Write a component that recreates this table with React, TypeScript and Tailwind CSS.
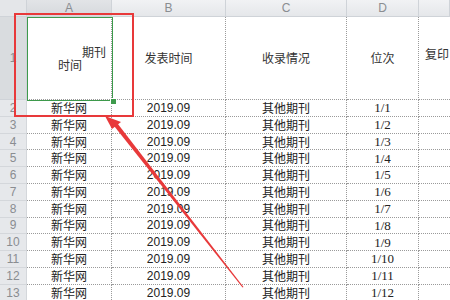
import React from 'react'

const cols = ['A', 'B', 'C', 'D', '']

const rows = Array.from({ length: 12 }, (_, i) => ({
  n: i + 2,
  src: '新华网',
  date: '2019.09',
  kind: '其他期刊',
  rank: `1/${i + 1}`,
}))

const cjk = "font-['Noto_Sans_CJK_SC',sans-serif]"
const cell = 'border-r border-b border-dotted border-[#9a9a9a]'

export default function App() {
  return (
    <div className="relative w-[450px] h-[300px] overflow-hidden bg-white">
      <div className="grid grid-cols-[27px_85px_114px_121px_72px_31px] grid-rows-[17px_83px] auto-rows-[16.8px]">
        {/* Header row */}
        <div className="bg-[#e4e6e9] border-r border-b border-[#cfd3d8]" />
        {cols.map((c, i) => (
          <div
            key={i}
            className={`flex items-center justify-center border-r border-b border-[#cfd3d8] text-[12px] text-[#8a8d91] font-['Liberation_Sans',sans-serif] bg-gradient-to-b ${
              i === 0 ? 'from-[#e2e4e7] to-[#d6d9dd]' : 'from-[#f1f2f4] to-[#e5e7ea]'
            }`}
          >
            {c}
          </div>
        ))}

        {/* Row 1 */}
        <div className="flex items-center justify-center bg-[#d9dcdf] border-r border-b border-[#cfd3d8] text-[12px] text-[#8a8d91] font-['Liberation_Sans',sans-serif]">
          1
        </div>
        <div className={`flex flex-col justify-center ${cell} text-[12px] text-[#333] ${cjk}`}>
          <div className="text-right pr-[5px] leading-[13px]">期刊</div>
          <div className="pl-[31px] leading-[13px]">时间</div>
        </div>
        <div className={`flex items-center justify-center ${cell} text-[12px] text-[#333] ${cjk}`}>
          发表时间
        </div>
        <div className={`flex items-center justify-center ${cell} text-[12px] text-[#333] ${cjk}`}>
          收录情况
        </div>
        <div className={`flex items-center justify-center ${cell} text-[12px] text-[#333] ${cjk}`}>
          位次
        </div>
        <div className={`pt-[30px] pl-[6px] border-b border-dotted border-[#9a9a9a] text-[12px] text-[#333] whitespace-nowrap leading-[14px] ${cjk}`}>
          复印
        </div>

        {/* Data rows */}
        {rows.map((r) => (
          <React.Fragment key={r.n}>
            <div className="flex items-center justify-center bg-[#e6e8eb] border-r border-b border-[#d4d7db] text-[12px] text-[#8a8d91] font-['Liberation_Sans',sans-serif]">
              {r.n}
            </div>
            <div className={`flex items-center justify-center ${cell} text-[12px] text-[#222] ${cjk}`}>
              {r.src}
            </div>
            <div className={`flex items-center justify-center ${cell} text-[12px] text-[#222] font-['Liberation_Sans',sans-serif]`}>
              {r.date}
            </div>
            <div className={`flex items-center justify-center ${cell} text-[12px] text-[#222] ${cjk}`}>
              {r.kind}
            </div>
            <div className={`flex items-center justify-center ${cell} text-[13px] text-[#222] font-['Liberation_Serif',serif]`}>
              {r.rank}
            </div>
            <div className="border-b border-dotted border-[#9a9a9a]" />
          </React.Fragment>
        ))}
      </div>

      {/* selected cell */}
      <div className="absolute left-[27px] top-[17px] w-[86px] h-[84px] ring-1 ring-inset ring-[#3e9a4c]">
        <div className="absolute -right-[3px] -bottom-[3px] w-[5px] h-[5px] bg-[#3e9a4c] ring-1 ring-white" />
      </div>

      {/* red highlight box */}
      <div className="absolute left-[14px] top-[13px] w-[120px] h-[104px] ring-2 ring-inset ring-[#e8393a]" />

      {/* red arrow */}
      <svg className="absolute left-0 top-0" width="450" height="300" viewBox="0 0 450 300">
        <polygon points="112.5,124 116,121.5 243.5,287 242.5,287.5" fill="#e8393a" />
        <polygon points="105,116 121,122 112,129" fill="#e8393a" />
      </svg>
    </div>
  )
}
